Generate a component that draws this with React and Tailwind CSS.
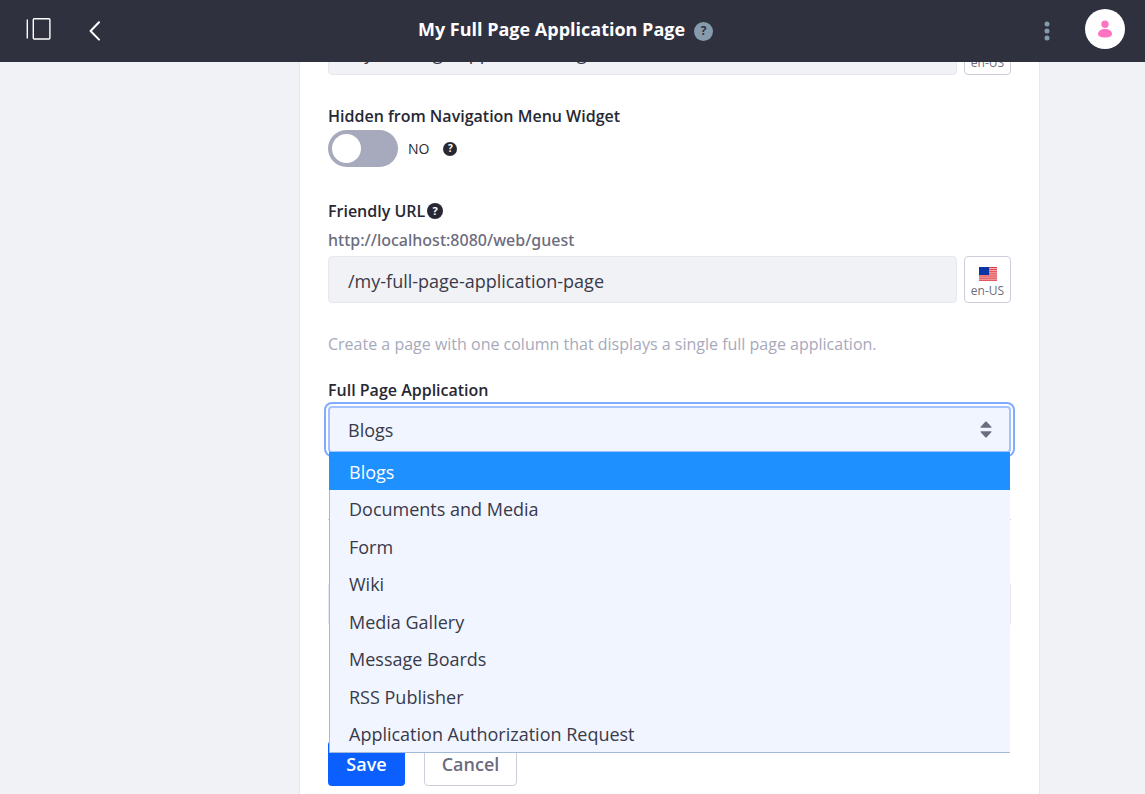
import React from "react";

const applications = [
  "Blogs",
  "Documents and Media",
  "Form",
  "Wiki",
  "Media Gallery",
  "Message Boards",
  "RSS Publisher",
  "Application Authorization Request",
];

function Flag() {
  return (
    <svg width="18" height="14" viewBox="0 0 18 14" aria-hidden="true">
      <rect width="18" height="14" fill="#f7d5d8" />
      {[0, 1, 2, 3, 4, 5, 6].map((i) => (
        <rect key={i} y={i * 2.1} width="18" height="1.2" fill="#e0393e" />
      ))}
      <rect width="10" height="8" fill="#0a36a5" />
    </svg>
  );
}

function LocaleButton({ label }) {
  return (
    <button
      type="button"
      aria-label={label}
      className="flex h-[47px] w-[47px] shrink-0 flex-col items-center rounded border border-[#cdced9] bg-white pt-[10px] text-[#6b6c7e]"
    >
      <Flag />
      <span className="text-xs leading-5">en-US</span>
    </button>
  );
}

function TextField({ id, value, label }) {
  return (
    <input
      id={id}
      type="text"
      aria-label={label}
      defaultValue={value}
      className="h-[47px] min-w-0 flex-1 rounded border border-[#e7e7ed] bg-[#f1f2f5] px-[19px] pt-0.5 text-lg text-[#393a4a] outline-none"
    />
  );
}

function Help({ className }) {
  return (
    <button
      type="button"
      aria-label="Help"
      className={`flex shrink-0 items-center justify-center rounded-full font-bold ${className}`}
    >
      ?
    </button>
  );
}

export default function App() {
  return (
    <div className="flex h-screen flex-col overflow-hidden bg-[#f1f2f5] font-['Open_Sans','Noto_Sans',sans-serif] text-[#272833]">
      <header className="z-10 flex h-[62px] shrink-0 items-center bg-[#30313f] pr-5 pb-1 pl-[26px] text-white">
        <div className="flex flex-1 items-center gap-[37px]">
          <button type="button" aria-label="Toggle product menu">
            <svg width="25" height="22" viewBox="0 0 25 22" fill="none" stroke="currentColor">
              <path d="M1.3 1.5v19" strokeWidth="1.4" />
              <rect x="7.3" y="0.8" width="16.6" height="20.2" rx="1" strokeWidth="1.4" />
            </svg>
          </button>
          <a href="#back" aria-label="Back" className="pt-1">
            <svg width="13" height="20" viewBox="0 0 13 20" fill="none" stroke="currentColor" strokeWidth="2" strokeLinecap="round" strokeLinejoin="round">
              <path d="M11 1.3L2.6 10L11 18.6" />
            </svg>
          </a>
        </div>
        <div className="mr-5 flex items-center gap-[9px]">
          <h1 className="text-lg leading-6 font-bold">My Full Page Application Page</h1>
          <Help className="mt-1 h-[19px] w-[19px] bg-[#869cad] text-xs text-[#30313f]" />
        </div>
        <div className="flex flex-1 items-center justify-end gap-[35px]">
          <button type="button" aria-label="Options" className="pt-1">
            <svg width="6" height="20" viewBox="0 0 6 20" fill="#869cad">
              <circle cx="3" cy="3" r="2.5" />
              <circle cx="3" cy="10" r="2.5" />
              <circle cx="3" cy="17" r="2.5" />
            </svg>
          </button>
          <button
            type="button"
            aria-label="User profile"
            className="flex h-10 w-10 items-center justify-center rounded-full bg-white"
          >
            <svg width="16" height="18" viewBox="0 0 16 18" fill="#ff73c3">
              <circle cx="8" cy="4.2" r="3.7" />
              <path d="M1 14C1 11 4 9 8 9s7 2 7 5C15 16.500 12 17.500 8 17.500S1 16.500 1 14z" />
            </svg>
          </button>
        </div>
      </header>

      <main className="-mt-[34px] mr-[105px] ml-[299px] flex-1 border-x border-[#e7e7ed] bg-white px-7">
        <form onSubmit={(e) => e.preventDefault()}>
          <div className="flex gap-[7px]">
            <TextField label="Name" value="My Full Page Application Page" />
            <LocaleButton label="Name language en-US" />
          </div>

          <div className="mt-[29px]">
            <label htmlFor="hidden" className="block leading-6 font-semibold">
              Hidden from Navigation Menu Widget
            </label>
            <div className="mt-0.5 flex items-center">
              <input
                id="hidden"
                type="checkbox"
                role="switch"
                className="h-[37px] w-[70px] appearance-none rounded-full bg-[#a7a9bc] before:mt-1 before:ml-1 before:block before:h-[29px] before:w-[29px] before:rounded-full before:bg-white checked:before:ml-[37px]"
              />
              <span className="ml-[10px] text-sm">NO</span>
              <Help className="ml-[14px] h-[14px] w-[14px] bg-[#272833] text-[10px] text-white" />
            </div>
          </div>

          <div className="mt-8">
            <div className="flex items-center gap-0.5">
              <label htmlFor="url" className="leading-6 font-semibold">
                Friendly URL
              </label>
              <Help className="h-4 w-4 bg-[#272833] text-[11px] text-white" />
            </div>
            <p className="mt-[5px] font-['Noto_Sans','Open_Sans',sans-serif] leading-6 font-medium text-[#6b6c7e]">
              http://localhost:8080/web/guest
            </p>
            <div className="mt-1 flex gap-[7px]">
              <TextField id="url" value="/my-full-page-application-page" />
              <LocaleButton label="URL language en-US" />
            </div>
          </div>

          <p className="mt-[29px] leading-6 text-[#a7a9bc]">
            Create a page with one column that displays a single full page application.
          </p>

          <div className="mt-[22px]">
            <label htmlFor="application" className="block leading-6 font-semibold">
              Full Page Application
            </label>
            <div className="relative mt-1">
              <select
                id="application"
                defaultValue="Blogs"
                className="block h-[47px] w-full appearance-none rounded border-2 border-[#a3c2ff] bg-[#f0f5ff] px-[18px] text-lg text-[#393a4a] ring-2 ring-[#80acff] ring-offset-2 outline-none"
              >
                {applications.map((name) => (
                  <option key={name}>{name}</option>
                ))}
              </select>
              <svg
                className="pointer-events-none absolute top-[15px] right-[19px]"
                width="12"
                height="17"
                viewBox="0 0 12 17"
                fill="#6b6c7e"
                aria-hidden="true"
              >
                <path d="M0.500 6L5.300 0.800Q6 0.200 6.700 0.800L11.500 6Q11.700 6.800 11 6.800H1Q0.300 6.800 0.500 6z" />
                <path d="M0.500 11L5.300 16.200Q6 16.800 6.700 16.200L11.500 11Q11.700 10.200 11 10.200H1Q0.300 10.200 0.500 11z" />
              </svg>
              <ul
                role="listbox"
                aria-label="Full Page Application"
                className="absolute inset-x-px top-[46px] z-10 grid h-[301px] auto-rows-fr border-b border-l border-[#a3b9d9] bg-[#f0f5ff] text-lg text-[#393a4a]"
              >
                {applications.map((name, i) => (
                  <li
                    key={name}
                    role="option"
                    aria-selected={i === 0}
                    className="-ml-px flex items-center px-5 pt-0.5 aria-selected:bg-[#1e90ff] aria-selected:text-white"
                  >
                    {name}
                  </li>
                ))}
              </ul>
            </div>
          </div>

          <hr className="mt-[66px] border-[#cdced9]" />
          <input
            type="text"
            aria-label="Additional value"
            className="mt-[62px] block h-[44px] w-full rounded border border-[#e7e7ed] bg-[#f1f2f5]"
          />

          <div className="mt-[115px] flex gap-[19px]">
            <button
              type="submit"
              className="h-[45px] w-[77px] rounded bg-[#0b5fff] text-lg font-semibold text-white"
            >
              Save
            </button>
            <button
              type="button"
              className="h-[45px] w-[93px] rounded border border-[#cdced9] bg-white text-lg font-semibold text-[#6b6c7e]"
            >
              Cancel
            </button>
          </div>
        </form>
      </main>
    </div>
  );
}
